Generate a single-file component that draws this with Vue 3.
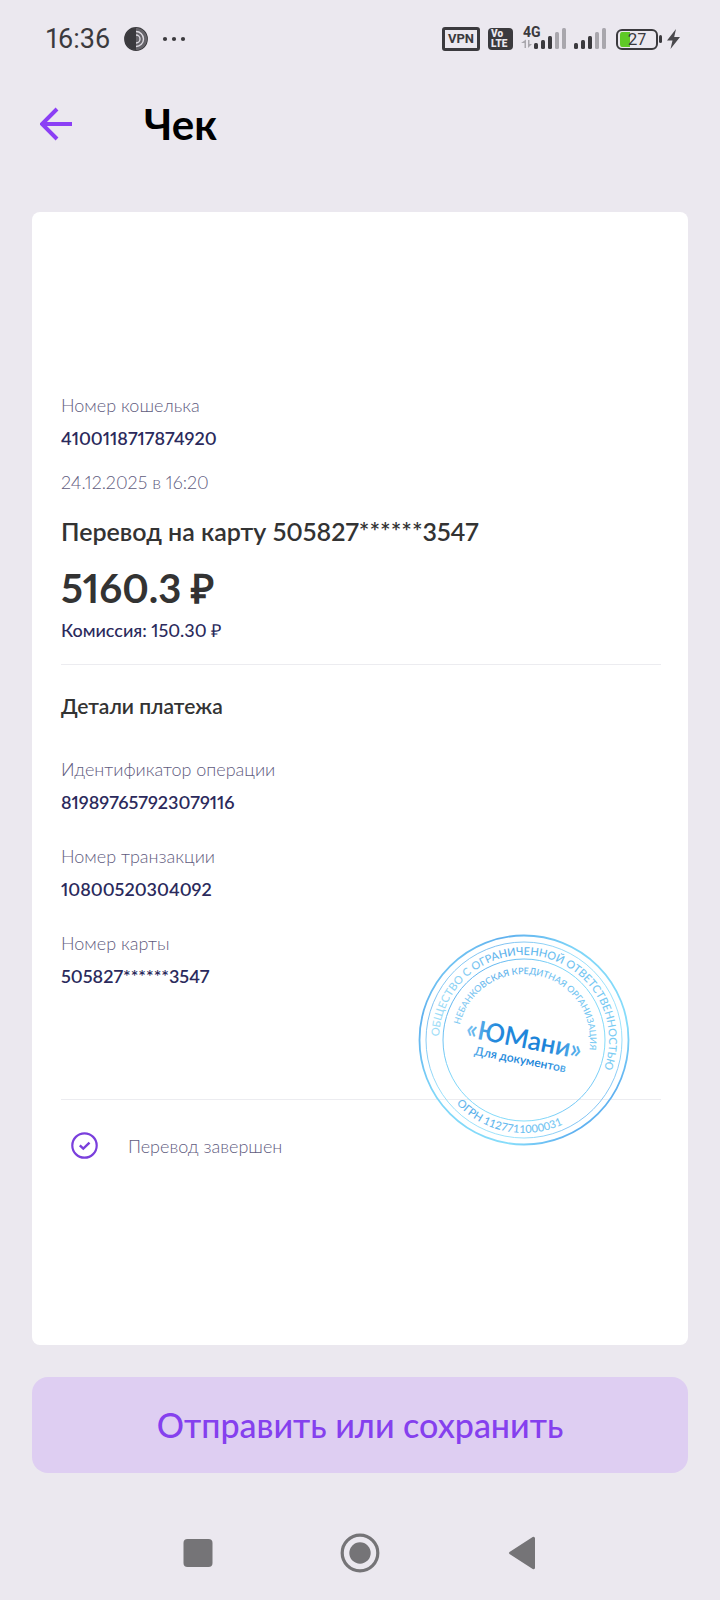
<template>
  <div class="screen">
    <header class="status-bar">
      <div class="status-left">
        <span class="clock">16:36</span>
        <svg class="app-dot" width="24" height="24" viewBox="0 0 24 24" fill="none">
          <circle cx="12" cy="12" r="11.2" stroke="#3b3a3e" stroke-width="1.4" />
          <path d="M12 1a11 11 0 0 0 0 22z" fill="#3b3a3e" />
          <path d="M12 1a11 11 0 0 1 0 22z" fill="#66646a" />
          <path d="M12 4.500a7.500 7.500 0 0 1 0 15M12 8a4 4 0 0 1 0 8" stroke="#dddae1" stroke-width="1.400" />
        </svg>
        <svg width="24" height="6" viewBox="0 0 24 6" fill="#3b3a3e">
          <circle cx="3" cy="3" r="2.100" />
          <circle cx="12" cy="3" r="2.100" />
          <circle cx="21" cy="3" r="2.100" />
        </svg>
      </div>

      <div class="status-right">
        <span class="vpn">VPN</span>
        <span class="volte"><span>Vo</span><span>LTE</span></span>
        <div class="mobile">
          <span class="net">4G</span>
          <svg width="45" height="22" viewBox="0 0 45 22">
            <path d="M3.500 20v-5H0l5-3.500V20zM7 12v8l4-4H8.500v-4z" fill="#a9a7ad" />
            <rect v-for="bar in bars" :key="bar.x" :x="bar.x + 13" :y="21 - bar.h" width="4" :height="bar.h" rx="1.500" :fill="bar.fill" />
          </svg>
        </div>
        <svg width="33" height="22" viewBox="0 0 33 22">
          <rect v-for="bar in bars" :key="bar.x" :x="bar.x" :y="21 - bar.h" width="4" :height="bar.h" rx="1.500" :fill="bar.fill" />
        </svg>
        <div class="power">
          <span class="battery">27</span>
          <svg width="5" height="8" viewBox="0 0 5 8"><rect x="1" y="0" width="3" height="8" rx="1.500" fill="#3b3a3e" /></svg>
          <svg class="bolt" width="13" height="20" viewBox="0 0 13 20"><path d="M9 0 0 11.500h5.500L3.500 20 13 8H7.200z" fill="#4a494d" /></svg>
        </div>
      </div>
    </header>

    <nav class="app-bar">
      <button class="back" type="button" aria-label="Назад">
        <svg width="34" height="34" viewBox="0 0 34 34" fill="none" stroke="#8b3ff5" stroke-width="4">
          <path d="M32 17H3M17 2 2 17l15 15" />
        </svg>
      </button>
      <h1>Чек</h1>
    </nav>

    <main class="receipt">
      <section class="summary">
        <p class="label">Номер кошелька</p>
        <p class="value">4100118717874920</p>
        <p class="label date">24.12.2025 в 16:20</p>
        <h2>Перевод на карту 505827******3547</h2>
        <p class="amount">5160.3 ₽</p>
        <p class="fee">Комиссия: 150.30 ₽</p>
      </section>

      <section class="details">
        <h3>Детали платежа</h3>
        <dl>
          <div v-for="item in details" :key="item.label" class="detail">
            <dt class="label">{{ item.label }}</dt>
            <dd class="value">{{ item.value }}</dd>
          </div>
        </dl>

        <svg class="stamp" width="212" height="212" viewBox="-106 -106 212 212">
          <defs>
            <linearGradient id="ring" gradientUnits="userSpaceOnUse" x1="-90" y1="-90" x2="90" y2="90">
              <stop offset="0" stop-color="#8adcf8" />
              <stop offset="0.15" stop-color="#5fb0ee" />
              <stop offset="0.4" stop-color="#7fd6f8" />
              <stop offset="0.75" stop-color="#86dcfa" />
              <stop offset="0.9" stop-color="#5fb0f0" />
              <stop offset="1" stop-color="#80d8f8" />
            </linearGradient>
            <linearGradient id="ink" gradientUnits="userSpaceOnUse" x1="-95" y1="0" x2="95" y2="0">
              <stop offset="0" stop-color="#a6e2f8" />
              <stop offset="0.3" stop-color="#58aeea" />
              <stop offset="0.6" stop-color="#6cc0f0" />
              <stop offset="1" stop-color="#7ccdf3" />
            </linearGradient>
            <linearGradient id="brand" gradientUnits="userSpaceOnUse" x1="-58" y1="0" x2="58" y2="0">
              <stop offset="0" stop-color="#7cc4f2" />
              <stop offset="0.25" stop-color="#2389dc" />
              <stop offset="0.7" stop-color="#1c82d8" />
              <stop offset="1" stop-color="#5cb4ee" />
            </linearGradient>
            <path id="arc-outer" d="M-85 0A85 85 0 1 1 85 0A85 85 0 0 1 -85 0" transform="rotate(-90)" />
            <path id="arc-inner" d="M-66 0A66 66 0 1 1 66 0A66 66 0 0 1 -66 0" transform="rotate(-90)" />
            <path id="arc-bottom" d="M-93 0A93 93 0 0 0 93 0" />
          </defs>
          <g fill="none" stroke="url(#ring)">
            <circle r="104.500" stroke-width="1.800" />
            <circle r="98" stroke-width="0.800" />
            <circle r="81" stroke-width="1" />
          </g>
          <g transform="rotate(11)" text-anchor="middle" fill="url(#ink)">
            <text class="stamp-outer"><textPath href="#arc-outer" startOffset="50%">ОБЩЕСТВО С ОГРАНИЧЕННОЙ ОТВЕТСТВЕННОСТЬЮ</textPath></text>
            <text class="stamp-inner"><textPath href="#arc-inner" startOffset="50%">НЕБАНКОВСКАЯ КРЕДИТНАЯ ОРГАНИЗАЦИЯ</textPath></text>
            <text class="stamp-outer stamp-reg"><textPath href="#arc-bottom" startOffset="50%">ОГРН 1127711000031</textPath></text>
            <text class="stamp-brand" y="8" fill="url(#brand)">«ЮМани»</text>
            <text class="stamp-note" y="24" fill="url(#brand)">Для документов</text>
          </g>
        </svg>
      </section>

      <footer class="state">
        <svg width="27" height="27" viewBox="0 0 27 27" fill="none" stroke="#7a3fdc">
          <circle cx="13.500" cy="13.500" r="12.200" stroke-width="2.200" />
          <path d="m8.800 13.300 3.500 3.400 6.200-6" stroke-width="2.400" />
        </svg>
        <span class="label">Перевод завершен</span>
      </footer>
    </main>

    <button class="share" type="button">Отправить или сохранить</button>

    <nav class="system-nav">
      <button type="button" aria-label="Недавние">
        <svg width="40" height="40" viewBox="0 0 40 40"><rect x="5.500" y="6" width="29" height="28" rx="4" fill="#757477" /></svg>
      </button>
      <button type="button" aria-label="Домой">
        <svg width="40" height="40" viewBox="0 0 40 40">
          <circle cx="20" cy="20" r="17.800" fill="none" stroke="#757477" stroke-width="3.200" />
          <circle cx="20" cy="20" r="10.700" fill="#757477" />
        </svg>
      </button>
      <button type="button" aria-label="Назад">
        <svg width="40" height="40" viewBox="0 0 40 40"><path d="M33 5v30a1.500 1.500 0 0 1-2.300 1L7.500 21a1.300 1.300 0 0 1 0-2L30.700 4A1.500 1.500 0 0 1 33 5z" fill="#757477" /></svg>
      </button>
    </nav>
  </div>
</template>

<script setup>
const bars = [
  { x: 0, h: 6, fill: '#3b3a3e' },
  { x: 7, h: 9, fill: '#3b3a3e' },
  { x: 14, h: 13, fill: '#3b3a3e' },
  { x: 21, h: 17, fill: '#a9a7ad' },
  { x: 28, h: 21, fill: '#a9a7ad' }
]

const details = [
  { label: 'Идентификатор операции', value: '819897657923079116' },
  { label: 'Номер транзакции', value: '10800520304092' },
  { label: 'Номер карты', value: '505827******3547' }
]
</script>

<style>
body {
  margin: 0;
  background: #ebe8ef;
}
</style>

<style scoped>
.screen {
  display: flex;
  flex-direction: column;
  min-height: 100vh;
  box-sizing: border-box;
  background: #ebe8ef;
  font-family: 'Lato', 'Liberation Sans', sans-serif;
  font-variant-numeric: proportional-nums;
  color: #333;
}

h1, h2, h3, p, dl, dd {
  margin: 0;
}

button {
  border: 0;
  padding: 0;
  background: none;
  font-family: inherit;
  cursor: pointer;
}

svg {
  display: block;
}

.status-bar {
  display: flex;
  justify-content: space-between;
  align-items: center;
  height: 78px;
  padding: 0 40px 0 46px;
  font-family: 'Roboto', sans-serif;
  color: #3b3a3e;
}

.status-left,
.status-right,
.power {
  display: flex;
  align-items: center;
}

.status-left {
  gap: 14px;
}

.status-right {
  gap: 8px;
}

.clock {
  font-size: 27px;
  line-height: 32px;
  font-weight: 400;
}

.vpn {
  border: 3px solid #3b3a3e;
  border-radius: 3px;
  padding: 0 3px;
  font-size: 13px;
  line-height: 18px;
  font-weight: 700;
}

.volte {
  display: flex;
  flex-direction: column;
  width: 25px;
  height: 22px;
  box-sizing: border-box;
  padding: 1px 3px;
  border-radius: 4px;
  background: #3b3a3e;
  color: #ebe8ef;
  font-size: 10px;
  line-height: 10px;
  font-weight: 900;
}

.mobile {
  position: relative;
}

.net {
  position: absolute;
  top: -3px;
  left: 2px;
  font-size: 14px;
  line-height: 14px;
  font-weight: 700;
}

.power {
  margin-left: 1px;
}

.battery {
  width: 34px;
  padding: 1px 2px;
  border: 2px solid #3b3a3e;
  border-radius: 6px;
  background: linear-gradient(to right, #5fc926 10px, transparent 10px) content-box;
  font-size: 17px;
  line-height: 15px;
  text-align: center;
}

.bolt {
  margin-left: 4px;
}

.app-bar {
  display: flex;
  align-items: center;
  gap: 70px;
  height: 92px;
  padding: 0 40px;
}

h1 {
  font-size: 42px;
  line-height: 48px;
  font-weight: 700;
  color: #000;
}

.receipt {
  margin: 42px 32px 0;
  padding: 181px 27px 186px 29px;
  border-radius: 8px;
  background: #fff;
}

.label {
  font-size: 18px;
  line-height: 24px;
  font-weight: 300;
  color: #5f5c80;
}

.value {
  margin-top: 9px;
  font-size: 18px;
  line-height: 24px;
  font-weight: 600;
  color: #2b2a5c;
}

.date {
  margin-top: 20px;
}

h2 {
  margin-top: 21px;
  font-size: 25px;
  line-height: 32px;
  font-weight: 600;
}

.amount {
  margin-top: 17px;
  font-size: 40px;
  line-height: 48px;
  font-weight: 700;
}

.fee {
  margin-top: 6px;
  font-size: 18px;
  line-height: 24px;
  font-weight: 500;
  color: #2b2a5c;
}

.summary,
.details {
  border-bottom: 1px solid #ececf0;
}

.summary {
  padding-bottom: 22px;
}

.details {
  position: relative;
  padding: 27px 0 111px;
}

h3 {
  font-size: 21px;
  line-height: 28px;
  font-weight: 600;
}

dl {
  display: flex;
  flex-direction: column;
  gap: 30px;
  margin-top: 37px;
}

.stamp {
  position: absolute;
  right: 31px;
  bottom: -47px;
}

.stamp-outer {
  font-size: 11px;
  font-weight: 500;
}

.stamp-reg {
  font-variant-numeric: tabular-nums;
}

.stamp-inner {
  font-size: 9px;
  font-weight: 500;
}

.stamp-brand {
  font-size: 26px;
  font-weight: 600;
}

.stamp-note {
  font-size: 12px;
  font-weight: 600;
}

.state {
  display: flex;
  align-items: center;
  gap: 30px;
  padding: 32px 10px 0;
}

.share {
  margin: 32px 32px 0;
  padding: 24px;
  border-radius: 16px;
  background: #decef2;
  color: #8540ee;
  font-size: 34px;
  line-height: 48px;
  font-weight: 500;
}

.system-nav {
  display: flex;
  justify-content: space-between;
  margin-top: auto;
  padding: 24px 178px 27px;
}
</style>
